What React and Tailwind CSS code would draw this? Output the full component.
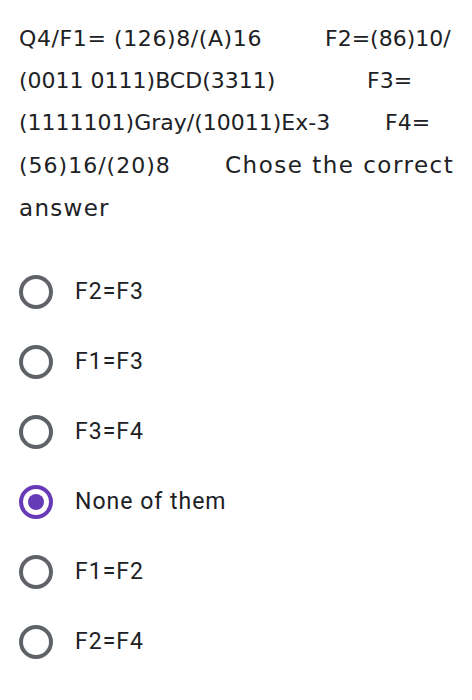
import React from "react";

const lines = [
  { a: "Q4/F1= (126)8/(A)16", b: "F2=(86)10/", w: "w-[306px] tracking-[0.6px]", t: "" },
  { a: "(0011 0111)BCD(3311)", b: "F3=", w: "w-[348px]", t: "" },
  { a: "(1111101)Gray/(10011)Ex-3", b: "F4=", w: "w-[366px]", t: "" },
  { a: "(56)16/(20)8", b: "Chose the correct", w: "w-[206px] tracking-[1px]", t: "text-[23px] tracking-[1.5px]" },
  { a: "answer", b: "", w: "text-[23px] tracking-[1.3px]", t: "" },
];

const options = [
  { label: "F2=F3", checked: false },
  { label: "F1=F3", checked: false },
  { label: "F3=F4", checked: false },
  { label: "None of them", checked: true },
  { label: "F1=F2", checked: false },
  { label: "F2=F4", checked: false },
];

const Radio = ({ checked }) => {
  if (checked) {
    return (
      <div className="w-[34px] h-[34px] rounded-full border-[4px] border-[#673ab7] flex items-center justify-center">
        <div className="w-[16px] h-[16px] rounded-full bg-[#673ab7]" />
      </div>
    );
  }
  return (
    <div className="w-[34px] h-[34px] rounded-full border-[4px] border-[#5f6368]" />
  );
};

export default function App() {
  return (
    <div className="w-[472px] h-[700px] bg-white overflow-hidden">
      <div
        className="pt-[18px] pl-[19px] text-[22px] leading-[42px] text-[#202124]"
        style={{ fontFamily: '"DejaVu Sans", sans-serif' }}
      >
        {lines.map((l, i) => (
          <div key={i} className="flex items-baseline whitespace-nowrap">
            <span className={l.w}>{l.a}</span>
            {l.b && <span className={l.t}>{l.b}</span>}
          </div>
        ))}
      </div>

      <div className="mt-[46px] pl-[19px] flex flex-col gap-[36px]">
        {options.map((o) => (
          <div key={o.label} className="flex items-center h-[34px]">
            <Radio checked={o.checked} />
            <span
              className="ml-[22px] text-[23px] tracking-[1px] text-[#202124]"
              style={{ fontFamily: "Roboto, sans-serif" }}
            >
              {o.label}
            </span>
          </div>
        ))}
      </div>
    </div>
  );
}
